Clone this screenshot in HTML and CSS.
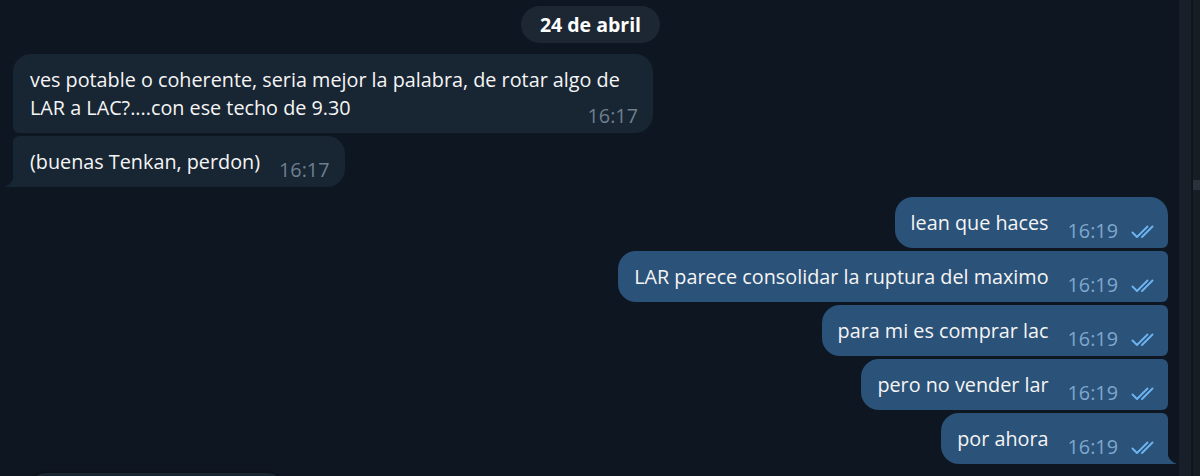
FILE: index.html
```html
<!DOCTYPE html>
<html lang="es">
<head>
<meta charset="utf-8">
<title>Chat</title>
<link rel="stylesheet" href="styles.css">
</head>
<body>
<div class="window">
  <main class="chat">
    <div class="date-row"><span class="date">24 de abril</span></div>

    <div class="bubble in first">
      <span class="text">ves potable o coherente, seria mejor la palabra, de rotar algo de LAR a LAC?....con ese techo de 9.30</span><span class="meta">16:17</span>
    </div>
    <div class="bubble in last">
      <span class="text">(buenas Tenkan, perdon)</span><span class="meta">16:17</span>
      <svg class="tail tail-in" width="10" height="14" viewBox="0 0 10 14"><path d="M10 0 C10 7 6 12 0 14 H10 Z" fill="#182533"/></svg>
    </div>

    <div class="bubble out first">
      <span class="text">lean que haces</span><span class="meta">16:19<svg class="ticks" width="26" height="14" viewBox="0 0 26 14"><path d="M1.5 7.5 L6 12 L16.5 1.5 M11 12 L21.5 1.5" fill="none" stroke="#6cb4f2" stroke-width="1.9" stroke-linecap="round" stroke-linejoin="round"/></svg></span>
    </div>
    <div class="bubble out">
      <span class="text">LAR parece consolidar la ruptura del maximo</span><span class="meta">16:19<svg class="ticks" width="26" height="14" viewBox="0 0 26 14"><path d="M1.5 7.5 L6 12 L16.5 1.5 M11 12 L21.5 1.5" fill="none" stroke="#6cb4f2" stroke-width="1.9" stroke-linecap="round" stroke-linejoin="round"/></svg></span>
    </div>
    <div class="bubble out">
      <span class="text">para mi es comprar lac</span><span class="meta">16:19<svg class="ticks" width="26" height="14" viewBox="0 0 26 14"><path d="M1.5 7.5 L6 12 L16.5 1.5 M11 12 L21.5 1.5" fill="none" stroke="#6cb4f2" stroke-width="1.9" stroke-linecap="round" stroke-linejoin="round"/></svg></span>
    </div>
    <div class="bubble out">
      <span class="text">pero no vender lar</span><span class="meta">16:19<svg class="ticks" width="26" height="14" viewBox="0 0 26 14"><path d="M1.5 7.5 L6 12 L16.5 1.5 M11 12 L21.5 1.5" fill="none" stroke="#6cb4f2" stroke-width="1.9" stroke-linecap="round" stroke-linejoin="round"/></svg></span>
    </div>
    <div class="bubble out last">
      <span class="text">por ahora</span><span class="meta">16:19<svg class="ticks" width="26" height="14" viewBox="0 0 26 14"><path d="M1.5 7.5 L6 12 L16.5 1.5 M11 12 L21.5 1.5" fill="none" stroke="#6cb4f2" stroke-width="1.9" stroke-linecap="round" stroke-linejoin="round"/></svg></span>
      <svg class="tail tail-out" width="10" height="14" viewBox="0 0 10 14"><path d="M0 0 C0 7 4 12 10 14 H0 Z" fill="#2b5278"/></svg>
    </div>

    <div class="bubble in next"></div>
  </main>
  <aside class="scrollbar">
    <div class="track-a"></div>
    <div class="divider"></div>
    <div class="track-b"><div class="thumb"></div></div>
  </aside>
</div>
</body>
</html>
```

FILE: styles.css
```css
* { box-sizing: border-box; }
html, body {
  margin: 0;
  padding: 0;
  background: #0e1621;
  height: 100%;
  overflow: hidden;
}
body {
  font-family: "Open Sans", "Noto Sans", sans-serif;
  color: #f5f5f5;
}
.window {
  display: flex;
  width: 1200px;
  height: 476px;
  overflow: hidden;
}
.chat {
  flex: 0 0 1179px;
  display: flex;
  flex-direction: column;
  align-items: flex-start;
  padding: 6px 11px 0 13px;
  overflow: hidden;
}
.date-row {
  align-self: stretch;
  display: flex;
  justify-content: center;
  margin-bottom: 11px;
}
.date {
  background: #1c2733;
  border-radius: 19px;
  height: 37px;
  line-height: 37px;
  padding: 0 19px;
  font-size: 19.5px;
  font-weight: 700;
  color: #ffffff;
}
.bubble {
  position: relative;
  display: flow-root;
  max-width: 640px;
  padding: 12px 15px 3px 17px;
  font-size: 19.8px;
  line-height: 28px;
  border-radius: 18px;
  margin-bottom: 3px;
  flex-shrink: 0;
}
.bubble.in {
  background: #182533;
}
.bubble.in.first { border-bottom-left-radius: 6px; }
.bubble.in.last { border-top-left-radius: 6px; border-bottom-left-radius: 0; margin-bottom: 10px; }
.bubble.out {
  align-self: flex-end;
  background: #2b5278;
  padding-left: 16px;
  padding-right: 11px;
  border-top-right-radius: 6px;
  border-bottom-right-radius: 6px;
}
.bubble.out.first { border-top-right-radius: 18px; }
.bubble.out.last { border-bottom-right-radius: 0; margin-bottom: 9px; }
.meta {
  float: right;
  margin-left: 19px;
  padding-top: 8px;
  font-size: 19.8px;
  line-height: 28px;
  color: #6d7f8f;
  white-space: nowrap;
  display: flex;
  align-items: center;
}
.bubble.out .meta { color: #7ea7cf; }
.ticks {
  margin-left: 13px;
  margin-top: 2px;
}
.tail {
  position: absolute;
  bottom: 0;
}
.tail-in { left: -9px; }
.tail-out { right: -9px; }
.bubble.next {
  margin-left: 17px;
  width: 253px;
  height: 30px;
  padding: 0;
  border-radius: 18px;
  box-shadow: 0 -1px 3px rgba(0,0,0,0.35);
}
.scrollbar {
  flex: 0 0 21px;
  display: flex;
  height: 476px;
}
.track-a { flex: 0 0 12px; background: #191f28; }
.divider { flex: 0 0 2px; background: #10151c; }
.track-b { flex: 1; background: #171d25; padding-top: 180px; }
.thumb { height: 10px; background: #2a313b; }
```
